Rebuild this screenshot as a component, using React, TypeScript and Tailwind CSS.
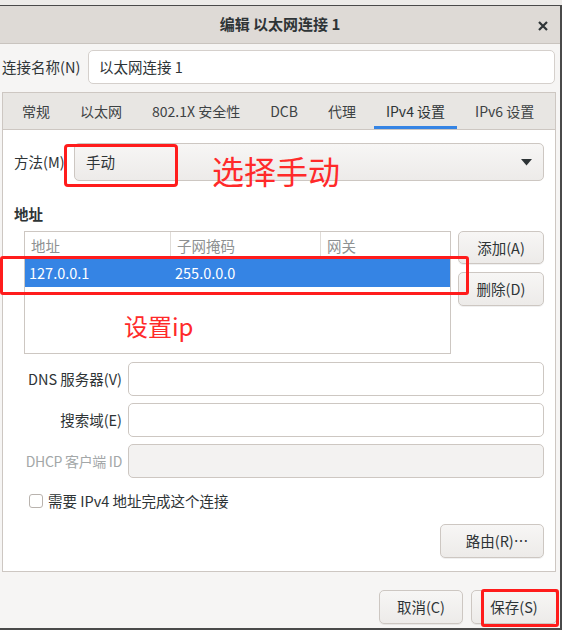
import React from "react";

const tabs = ["常规", "以太网", "802.1X 安全性", "DCB", "代理", "IPv4 设置", "IPv6 设置"];

function GtkButton({ label, className = "" }: { label: string; className?: string }) {
  return (
    <button
      className={`flex items-center justify-center rounded-[5px] border border-[#cdc7c2] bg-gradient-to-b from-[#f7f6f5] to-[#edebe9] text-[#2e3436] shadow-[0_1px_0_rgba(0,0,0,0.06)] ${className}`}
    >
      {label}
    </button>
  );
}

function Entry({ disabled = false }: { disabled?: boolean }) {
  return (
    <div
      className={`h-[34px] flex-1 rounded-[5px] border border-[#cdc7c2] ${
        disabled ? "bg-[#f3f2f1]" : "bg-white"
      }`}
    />
  );
}

export default function App() {
  return (
    <div
      className="relative h-[630px] w-[562px] overflow-hidden bg-[#edebe9] pt-[5px] text-[15px] text-[#2e3436]"
      style={{ fontFamily: '"Noto Sans CJK SC", "Noto Sans", sans-serif' }}
    >
      {/* window */}
      <div className="flex h-[625px] flex-col border-t border-r-2 border-b-2 border-[#4a4a4a] bg-[#f6f5f4]">
        {/* title bar */}
        <div className="relative flex h-[38px] shrink-0 items-center justify-center border-b border-[#c9c4bf] bg-[#dedad6]">
          <span className="font-bold text-[15px]">编辑 以太网连接 1</span>
          <svg className="absolute right-[12px] top-[15px]" width="10" height="10" viewBox="0 0 10 10">
            <path d="M1 1 L9 9 M9 1 L1 9" stroke="#2e3436" strokeWidth="2.2" />
          </svg>
        </div>

        {/* connection name */}
        <div className="mt-[6px] flex items-center pl-[2px] pr-[5px]">
          <span className="w-[86px] shrink-0 text-[14.5px]">连接名称(N)</span>
          <div className="flex h-[34px] flex-1 items-center rounded-[5px] border border-[#d5d0cc] bg-white pl-[10px] text-[14.5px]">
            以太网连接 1
          </div>
        </div>

        {/* notebook */}
        <div className="ml-[2px] mr-[4px] mt-[8px] flex flex-col border border-[#cdc7c2]">
          <div className="flex h-[37px] items-stretch gap-[6px] overflow-hidden border-b border-[#cdc7c2] bg-[#e8e6e3] pl-[7px]">
            {tabs.map((t) => (
              <div
                key={t}
                className={`flex shrink-0 items-center whitespace-nowrap px-[12px] pt-[1px] text-[14px] ${
                  t === "IPv4 设置" ? "border-b-[3px] border-[#3584e4] pt-[4px]" : "text-[#3d4244]"
                }`}
              >
                {t}
              </div>
            ))}
          </div>

          <div className="flex flex-col bg-white px-[11px] pb-[13px] pt-[13px] text-[14.5px]">
            {/* method */}
            <div className="flex items-center">
              <span className="w-[60px] shrink-0">方法(M)</span>
              <div className="flex h-[38px] flex-1 items-center justify-between rounded-[5px] border border-[#cdc7c2] bg-gradient-to-b from-[#f7f6f5] to-[#edebe9] pl-[11px] pr-[11px]">
                <span>手动</span>
                <svg width="11" height="7" viewBox="0 0 11 7">
                  <path d="M0 0 L11 0 L5.5 6.5 Z" fill="#2e3436" />
                </svg>
              </div>
            </div>

            {/* addresses */}
            <div className="mt-[23px] h-[20px] font-bold leading-[20px]">地址</div>
            <div className="mt-[7px] flex gap-[7px] pl-[10px]">
              <div className="h-[123px] w-[427px] border border-[#cdc7c2] bg-white">
                <div className="flex h-[27px] text-[#8e9192]">
                  <div className="flex w-[146px] items-center border-r border-[#e0dcd8] pl-[6px]">地址</div>
                  <div className="flex w-[150px] items-center border-r border-[#e0dcd8] pl-[6px]">子网掩码</div>
                  <div className="flex flex-1 items-center pl-[6px]">网关</div>
                </div>
                <div className="flex h-[28px] bg-[#3584e4] text-white">
                  <div className="flex w-[146px] items-center pl-[4px]">127.0.0.1</div>
                  <div className="flex w-[150px] items-center pl-[4px]">255.0.0.0</div>
                  <div className="flex-1" />
                </div>
              </div>
              <div className="flex flex-col gap-[8px]">
                <GtkButton label="添加(A)" className="h-[33px] w-[86px]" />
                <GtkButton label="删除(D)" className="h-[34px] w-[86px]" />
              </div>
            </div>

            {/* dns etc */}
            <div className="mt-[8px] flex flex-col gap-[7px]">
              <div className="flex items-center gap-[6px]">
                <span className="w-[108px] shrink-0 text-right">DNS 服务器(V)</span>
                <Entry />
              </div>
              <div className="flex items-center gap-[6px]">
                <span className="w-[108px] shrink-0 text-right">搜索域(E)</span>
                <Entry />
              </div>
              <div className="flex items-center gap-[6px]">
                <span className="w-[108px] shrink-0 whitespace-nowrap text-right text-[14px] tracking-[-0.3px] text-[#a3a7a8]">DHCP 客户端 ID</span>
                <Entry disabled />
              </div>
            </div>

            <div className="ml-[15px] mt-[12px] flex items-center gap-[5px]">
              <div className="h-[14px] w-[14px] rounded-[3px] border border-[#b9b3ae] bg-white" />
              <span>需要 IPv4 地址完成这个连接</span>
            </div>

            <div className="mt-[12px] flex justify-end">
              <GtkButton label="路由(R)…" className="h-[34px] w-[104px] pl-[10px]" />
            </div>
          </div>
        </div>

        {/* action buttons */}
        <div className="mt-[18px] flex justify-end gap-[8px] pr-[3px] text-[14.5px]">
          <GtkButton label="取消(C)" className="h-[34px] w-[84px]" />
          <GtkButton label="保存(S)" className="h-[34px] w-[86px]" />
        </div>
      </div>

      {/* annotations */}
      <div className="absolute left-[64px] top-[144px] h-[43px] w-[114px] rounded-[4px] border-[3px] border-[#ff1c1c]" />
      <div className="absolute left-[212px] top-[150px] text-[32px] leading-[40px] text-[#ff2a2a]">选择手动</div>
      <div className="absolute left-0 top-[256px] h-[39px] w-[469px] rounded-[3px] border-[3px] border-[#ff1c1c]" />
      <div className="absolute left-[124px] top-[310px] text-[24px] leading-[32px] text-[#ff2a2a]">设置ip</div>
      <div className="absolute left-[481px] top-[589px] h-[38px] w-[78px] rounded-[3px] border-[3px] border-[#ff1c1c]" />
    </div>
  );
}
